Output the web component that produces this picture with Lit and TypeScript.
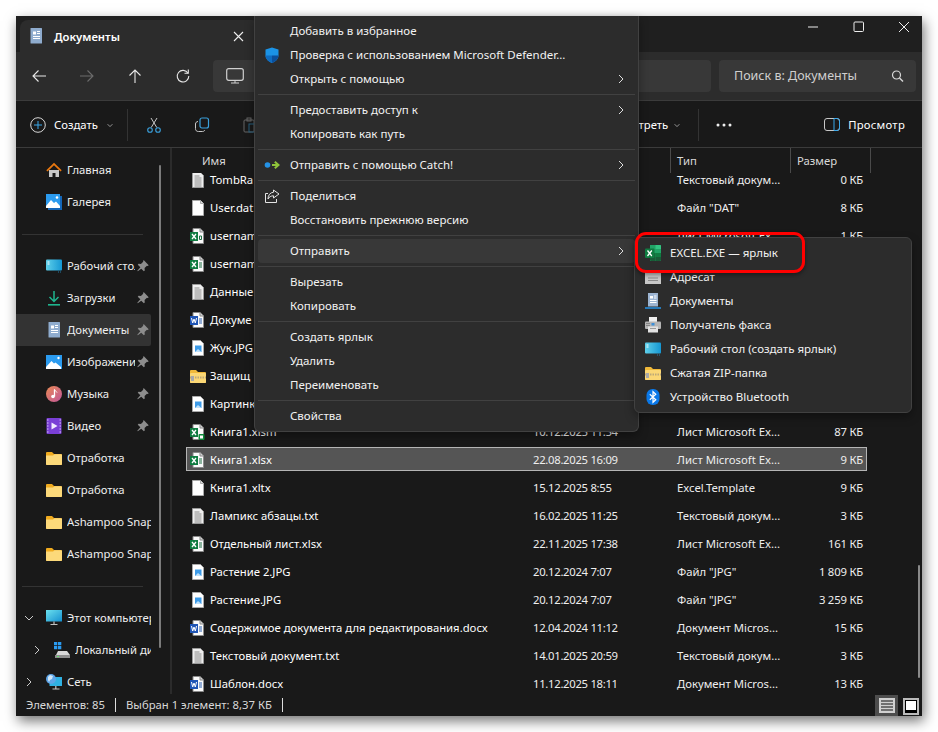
import { LitElement, html, css, svg } from "lit";
import { customElement } from "lit/decorators.js";

const ic = (body: unknown, w = 16, h = 16, vb = "0 0 16 16") =>
  html`<svg width=${w} height=${h} viewBox=${vb} fill="none">${body}</svg>`;

const page = svg`<path d="M3 .5h7l3.500 3.500v11.500H3z" fill="#fafafa" stroke="#8a8a8a"/><path d="M10 .5V4h3.500" fill="#d8d8d8" stroke="#8a8a8a"/>`;
const icons: Record<string, () => unknown> = {
  txt: () => ic(svg`<path d="M2.500.5h8l3 3v12h-11z" fill="#eee" stroke="#9a9a9a"/><path d="M4.500 4h5M4.500 6h7M4.500 8h7M4.500 10h7M4.500 12h7M4.500 14h7" stroke="#8c8c8c"/>`),
  blank: () => ic(svg`<path d="M2.500.5h8l3 3v12h-11z" fill="#fff" stroke="#aaa"/><path d="M10.500.5v3h3" fill="#ddd" stroke="#aaa"/>`),
  xls: () => ic(svg`${page}<path d="M9 7h3M9 9h3M9 11h3" stroke="#1d6f42"/><rect x="0" y="4" width="8" height="9" fill="#107c41"/><path d="M2 6l4 5M6 6l-4 5" stroke="#fff" stroke-width="1.300"/>`),
  xla: () => ic(svg`${page}<rect x="0" y="4" width="8" height="9" fill="#107c41"/><path d="M2 6l4 5M6 6l-4 5" stroke="#fff" stroke-width="1.300"/><path d="M9.500 8h2v3.500h-2z" stroke="#1d6f42"/>`),
  xlm: () => ic(svg`${page}<rect x="0" y="4" width="8" height="9" fill="#107c41"/><path d="M2 6l4 5M6 6l-4 5" stroke="#fff" stroke-width="1.300"/><rect x="8.500" y="10" width="6" height="6" rx="1" fill="#0e8a3a"/><rect x="10" y="11.500" width="3" height="3" fill="#fff"/>`),
  doc: () => ic(svg`${page}<path d="M9 7h3M9 9h3M9 11h3" stroke="#2b5fb0"/><rect x="0" y="4" width="8" height="9" fill="#1f55b5"/><path d="M1.500 6l1.200 5 1.300-4 1.300 4 1.200-5" stroke="#fff"/>`),
  img: () => ic(svg`<path d="M2.500.5h8l3 3v12h-11z" fill="#fff" stroke="#aaa"/><rect x="5" y="5.500" width="6.500" height="6.500" fill="#3d9be8"/><path d="M5 12l3-3 3.500 3z" fill="#bfe1fb"/>`),
  zip: () => ic(svg`<path d="M0 3a1 1 0 011-1h5l2 2h7a1 1 0 011 1v9a1 1 0 01-1 1H1a1 1 0 01-1-1z" fill="#f0b93a"/><rect y="5" width="16" height="10" rx="1" fill="#fbd775"/><path d="M0 9.500h16" stroke="#bda979" stroke-width="2" stroke-dasharray="1.500 1"/><rect x="1" y="8" width="3" height="5" fill="#a8a8a8"/>`),
  folder: () => ic(svg`<path d="M0 3a1 1 0 011-1h5l2 2h7a1 1 0 011 1v9a1 1 0 01-1 1H1a1 1 0 01-1-1z" fill="#f0ab1f"/><path d="M0 5.500h7l1.500-1.300H15a1 1 0 011 1V14a1 1 0 01-1 1H1a1 1 0 01-1-1z" fill="#fcd97a"/>`),
  home: () => ic(svg`<path d="M3 8h10v7H9.500v-4h-3v4H3z" fill="#c9c9c9"/><path d="M8 .8L.3 8.300l1.200 1.200L8 3.300l6.500 6.200 1.200-1.200z" fill="#e8770f"/>`),
  gallery: () => ic(svg`<rect x="0" y="0" width="14" height="14" fill="#2b9bef"/><path d="M14 2h2v14H2v-2h12z" fill="#1466b8"/><path d="M0 12l5-6 3 3 2-1.500 4 4.500v2H0z" fill="#fff"/><circle cx="11" cy="3.500" r="1.300" fill="#fff"/>`),
  desktop: () => ic(svg`<defs><linearGradient id="dk" x2="1"><stop stop-color="#5fd0ea"/><stop offset="1" stop-color="#1597d3"/></linearGradient></defs><rect y="1.500" width="16" height="11" rx="1" fill="url(#dk)"/><path d="M1.500 4h2M1.500 6h2" stroke="#fff"/><path d="M12 14h.8M14 14h.8" stroke="#2a8fc4"/>`),
  download: () => ic(svg`<path d="M8 1v10M3.500 7L8 11.500 12.500 7" stroke="#1fb58f" stroke-width="1.500"/><path d="M2 14.800h12" stroke="#1fb58f" stroke-width="1.600"/>`),
  documents: () => ic(svg`<rect x="2.500" y="0" width="11.500" height="15.500" rx=".5" fill="#8facce"/><path d="M5 3.500h3v3H5z" fill="#fff"/><path d="M9 3.500h3M9 5.500h3M5 8.500h7M5 10.500h7" stroke="#fff"/>`),
  pictures: () => ic(svg`<rect width="16" height="14" y="1" fill="#2b9bef"/><path d="M0 13l5.500-6 2.500 2.500 1.500-1L15 13v2H0z" fill="#fff"/><circle cx="12.500" cy="4" r="1.200" fill="#fff"/>`),
  music: () => ic(svg`<defs><linearGradient id="mu" x2="1" y2="1"><stop stop-color="#ea8a54"/><stop offset="1" stop-color="#c0569a"/></linearGradient></defs><circle cx="8" cy="8" r="8" fill="url(#mu)"/><path d="M8.500 3.500v7" stroke="#fff" stroke-width="1.300"/><path d="M8.500 3.500c.5 1.500 2 1.700 2.500 3" stroke="#fff"/><circle cx="7" cy="10.500" r="1.800" fill="#fff"/>`),
  video: () => ic(svg`<rect x=".5" y="0" width="15" height="16" rx="1" fill="#7a3fd6"/><path d="M1 2h1.500M1 5h1.500M1 8h1.500M1 11h1.500M1 14h1.500M13.500 2H15M13.500 5H15M13.500 8H15M13.500 11H15M13.500 14H15" stroke="#d7c2f7"/><path d="M5.500 4.500v7l6-3.500z" fill="#f2e9ff"/>`),
  pc: () => ic(svg`<defs><linearGradient id="pc" x2="1" y2="1"><stop stop-color="#6be0ee"/><stop offset="1" stop-color="#1590d0"/></linearGradient></defs><rect y="0" width="16" height="11.500" fill="url(#pc)"/><path d="M8 11.500V14M4.500 14.500h7" stroke="#bfbfbf" stroke-width="1.200"/>`),
  drive: () => ic(svg`<path d="M0 0h3.300v3.300H0zM4 0h3.300v3.300H4zM0 4h3.300v3.300H0zM4 4h3.300v3.300H4z" fill="#2a9af0"/><path d="M2 13l2-4h9l3 4v3H1z" fill="#d8d8d8"/><path d="M1 13h15v3H1z" fill="#8f8f8f"/><path d="M3 14.500h2" stroke="#5fe06a"/>`),
  net: () => ic(svg`<rect x="3.500" y="3" width="12.500" height="9" fill="#2fb1e3"/><path d="M9.800 12v2.500M6.500 15h7" stroke="#c5c5c5" stroke-width="1.200"/><circle cx="5" cy="5" r="5" fill="#5ea5e8"/><path d="M2 3l2-2 3 1-1 3-2 1-1 2-1-2z" fill="#cfe6f8"/>`),
  defender: () => ic(svg`<path d="M8 .5l6.500 2v6c0 4-4 6.500-6.500 7.500-2.500-1-6.500-3.500-6.500-7.500v-6z" fill="#1b93e6"/><path d="M8 .5v15.500c-2.500-1-6.500-3.500-6.500-7.500H8z" fill="#0f6cc0"/><path d="M8 8.500h6.500c0 4-4 6.500-6.500 7.500z" fill="#0b4f9c"/>`),
  catch: () => ic(svg`<circle cx="3.500" cy="8" r="2.800" fill="#2492e6"/><path d="M8 8h6M10.800 4.800L14.500 8l-3.700 3.200" stroke="#8fc43a" stroke-width="2"/>`),
  share: () => ic(svg`<path d="M4 5.500H1.500v9h11V11" stroke="#e4e4e4"/><path d="M9.500 2l5.500 4-5.500 4V7.800C7 7.800 5 9 4 11c0-4 2.300-6.500 5.500-6.800z" stroke="#e4e4e4"/>`),
  excel: () => ic(svg`<path d="M5 0h10a1 1 0 011 1v14a1 1 0 01-1 1H5z" fill="#21a366"/><path d="M10.500 0H15a1 1 0 011 1v3h-5.500z" fill="#33c481"/><path d="M5 8h5.500v8H6a1 1 0 01-1-1z" fill="#185c37"/><path d="M10.500 8H16v4h-5.500z" fill="#107c41"/><path d="M10.500 12H16v3a1 1 0 01-1 1h-4.500z" fill="#185c37"/><rect y="3.500" width="9.500" height="9.500" rx="1" fill="#107c41"/><path d="M2.500 5.500l4.300 5.500M6.800 5.500L2.500 11" stroke="#fff" stroke-width="1.300"/>`),
  mail: () => ic(svg`<rect y="3" width="16" height="12" fill="#c8c8c8"/><path d="M3 9h10M3 11.500h10" stroke="#8a8a8a"/>`),
  docsend: () => ic(svg`<rect x="3" y="0" width="10" height="13.500" fill="#9db5d2"/><path d="M5 3h3v2.500H5z" fill="#fff"/><path d="M9 3h2.500M9 5h2.500M5 7.500h6.500M5 9.500h6.500" stroke="#fff"/><path d="M0 15h16" stroke="#2492e6" stroke-width="1.500"/>`),
  fax: () => ic(svg`<rect x="4" y="0" width="8" height="5" fill="#eee"/><rect y="4.500" width="16" height="7.500" rx="1" fill="#b5b5b5"/><rect x="3" y="9.500" width="10" height="6" fill="#e2e2e2"/><path d="M1.500 6.500h3M1.500 8.500h3M5.500 11.500h5" stroke="#555" stroke-dasharray="1 1"/><rect x="6.500" y="6" width="3" height="2.500" fill="#3d8fd8"/>`),
  bt: () => ic(svg`<rect x="1.500" y="0" width="13" height="16" rx="6" fill="#0a78e8"/><path d="M4.800 5.200l6 5.500L8 13.300V2.700l2.800 2.600-6 5.500" stroke="#fff" stroke-width="1.200"/>`),
};

const chev = (d = "M3 1l4 4-4 4", w = 10) =>
  html`<svg width=${w} height=${w} viewBox="0 0 10 10" fill="none"><path d=${d} stroke="currentColor"/></svg>`;
const pin = () =>
  ic(svg`<path d="M9 1.500l5.500 5.500-1 1-1-.3-2.700 2.700.2 2.600-1 1-3-3L2 14l-.500-.5 3.500-4-3-3 1-1 2.600.2L8.300 3l-.3-1z" fill="#8d8d8d"/>`, 14, 14);

type NavRow = { t?: string; i?: string; pin?: boolean; tree?: "open" | "closed"; sub?: boolean; on?: boolean; div?: boolean };
const nav: NavRow[] = [
  { t: "Главная", i: "home" },
  { t: "Галерея", i: "gallery" },
  { div: true },
  { t: "Рабочий стол", i: "desktop", pin: true },
  { t: "Загрузки", i: "download", pin: true },
  { t: "Документы", i: "documents", pin: true, on: true },
  { t: "Изображения", i: "pictures", pin: true },
  { t: "Музыка", i: "music", pin: true },
  { t: "Видео", i: "video", pin: true },
  { t: "Отработка", i: "folder" },
  { t: "Отработка", i: "folder" },
  { t: "Ashampoo Snap", i: "folder" },
  { t: "Ashampoo Snap", i: "folder" },
  { div: true },
  { t: "Этот компьютер", i: "pc", tree: "open" },
  { t: "Локальный диск", i: "drive", tree: "closed", sub: true },
  { t: "Сеть", i: "net", tree: "closed" },
];

// rows that sit behind the context menu only show what is visible round it
const files = [
  ["txt", "TombRa", "", "Текстовый докум...", "0 КБ"],
  ["blank", "User.dat", "", 'Файл "DAT"', "8 КБ"],
  ["xla", "usernam", "", "Лист Microsoft Ex...", "1 КБ"],
  ["xls", "usernam", "", "", ""],
  ["txt", "Данные", "", "", ""],
  ["doc", "Докуме", "", "", ""],
  ["img", "Жук.JPG", "", "", ""],
  ["zip", "Защищ", "", "", ""],
  ["img", "Картинк", "", "", ""],
  ["xlm", "Книга1.xlsm", "10.12.2025 11:54", "Лист Microsoft Ex...", "87 КБ"],
  ["xls", "Книга1.xlsx", "22.08.2025 16:09", "Лист Microsoft Ex...", "9 КБ"],
  ["blank", "Книга1.xltx", "15.12.2025 8:55", "Excel.Template", "9 КБ"],
  ["txt", "Лампикс абзацы.txt", "16.02.2025 11:25", "Текстовый докум...", "3 КБ"],
  ["xls", "Отдельный лист.xlsx", "22.11.2025 17:38", "Лист Microsoft Ex...", "161 КБ"],
  ["img", "Растение 2.JPG", "20.12.2024 7:07", 'Файл "JPG"', "1 809 КБ"],
  ["img", "Растение.JPG", "20.12.2024 7:07", 'Файл "JPG"', "3 259 КБ"],
  ["doc", "Содержимое документа для редактирования.docx", "12.04.2024 11:12", "Документ Micros...", "15 КБ"],
  ["txt", "Текстовый документ.txt", "14.01.2025 20:59", "Текстовый докум...", "3 КБ"],
  ["doc", "Шаблон.docx", "11.12.2025 18:11", "Документ Micros...", "13 КБ"],
];

type MenuRow = { t?: string; i?: string; more?: boolean; on?: boolean } | null;
const menu: MenuRow[] = [
  { t: "Добавить в избранное" },
  { t: "Проверка с использованием Microsoft Defender...", i: "defender" },
  { t: "Открыть с помощью", more: true },
  null,
  { t: "Предоставить доступ к", more: true },
  { t: "Копировать как путь" },
  null,
  { t: "Отправить с помощью Catch!", i: "catch", more: true },
  null,
  { t: "Поделиться", i: "share" },
  { t: "Восстановить прежнюю версию" },
  null,
  { t: "Отправить", more: true, on: true },
  null,
  { t: "Вырезать" },
  { t: "Копировать" },
  null,
  { t: "Создать ярлык" },
  { t: "Удалить" },
  { t: "Переименовать" },
  null,
  { t: "Свойства" },
];

const sendTo = [
  ["excel", "EXCEL.EXE — ярлык"],
  ["mail", "Адресат"],
  ["docsend", "Документы"],
  ["fax", "Получатель факса"],
  ["desktop", "Рабочий стол (создать ярлык)"],
  ["zip", "Сжатая ZIP-папка"],
  ["bt", "Устройство Bluetooth"],
];

@customElement("app-root")
export class AppRoot extends LitElement {
  static styles = css`
    :host {
      display: block;
      position: relative;
      width: 938px;
      height: 732px;
      background: #fff;
      padding: 16px;
      box-sizing: border-box;
      overflow: hidden;
      font: 11.300px/16px "Noto Sans", "Open Sans", sans-serif;
      color: #fff;
    }
    .win {
      position: relative;
      width: 906px;
      height: 700px;
      display: flex;
      flex-direction: column;
      background: #191919;
      box-shadow: 2px 5px 12px rgba(0, 0, 0, 0.55);
    }
    .title {
      height: 36px;
      flex: none;
      display: flex;
      background: #1f1f1f;
      padding: 4px 0 0 4px;
      box-sizing: border-box;
    }
    .tab {
      width: 240px;
      display: flex;
      align-items: center;
      background: #2c2c2c;
      border-radius: 8px 8px 0 0;
      padding-left: 8px;
      box-sizing: border-box;
      gap: 10px;
      font-weight: 600;
    }
    .tab b { font-weight: 600; padding-top: 2px; }
    .tab .x { margin-left: auto; margin-right: 14px; display: flex; }
    .winbtns { margin-left: auto; margin-right: -5px; display: flex; }
    .winbtns span { width: 45.500px; height: 14px; display: flex; align-items: center; justify-content: center; }
    .addr {
      height: 48px;
      flex: none;
      display: flex;
      align-items: center;
      background: #2c2c2c;
      border-bottom: 1px solid #3b3b3b;
    }
    .navbtn { width: 48px; display: flex; justify-content: center; color: #e8e8e8; }
    .navbtn:first-child { margin-left: -1px; }
    .navbtn.off { color: #6c6c6c; }
    .path {
      width: 498px;
      height: 32px;
      margin-left: 6px;
      background: #383838;
      border-radius: 4px;
      display: flex;
      align-items: center;
      padding-left: 13px;
      box-sizing: border-box;
    }
    .search {
      width: 197px;
      height: 32px;
      margin-left: 8px;
      background: #383838;
      border-radius: 4px;
      display: flex;
      align-items: center;
      justify-content: space-between;
      padding: 0 12px 0 15px;
      box-sizing: border-box;
      color: #cfcfcf;
      font-size: 12.500px;
    }
    .tools {
      height: 47px;
      flex: none;
      display: flex;
      align-items: center;
      border-bottom: 1px solid #3b3b3b;
      padding: 2px 0 0 14px;
      box-sizing: border-box;
    }
    .create { display: flex; align-items: center; gap: 8px; width: 97px; flex: none; }
    .create i { color: #b5b5b5; display: flex; }
    .sep { width: 1px; height: 32px; background: #333; flex: none; }
    .tool { width: 48px; display: flex; justify-content: center; }
    .tools .tool:first-of-type { margin-left: 2px; }
    .right { margin-left: auto; display: flex; align-items: center; }
    .sort { display: flex; align-items: center; gap: 5px; margin-right: 17px; }
    .sort i { color: #b5b5b5; display: flex; }
    .dots { width: 50px; display: flex; justify-content: center; margin-right: 75px; }
    .preview { display: flex; align-items: center; gap: 8px; margin-right: 17px; letter-spacing: 0.25px; }
    .main { flex: 1; display: flex; min-height: 0; }
    .side {
      position: relative;
      width: 154px;
      flex: none;
      padding-top: 6px;
      box-sizing: border-box;
    }
    .bar { position: absolute; background: #7b7b7b; border-radius: 1px; width: 2px; }
    .side .bar { left: 143px; top: 17px; height: 483px; }
    .nav {
      width: 135px;
      height: 32px;
      display: flex;
      align-items: center;
      padding-left: 30px;
      box-sizing: border-box;
      border-radius: 0 2px 2px 0;
      white-space: nowrap;
      color: #eee;
    }
    .nav.on { background: #333; }
    .nav.tree { padding-left: 8px; }
    .nav.sub { padding-left: 16px; }
    .slot { width: 22px; flex: none; display: flex; color: #ccc; }
    .nav > svg { flex: none; }
    .nav .lbl { flex: 1; min-width: 0; overflow: hidden; margin-left: 5px; }
    .nav .pin { width: 16px; flex: none; display: flex; justify-content: center; }
    .ndiv { height: 32px; display: flex; align-items: center; padding-left: 6px; }
    .ndiv::before { content: ""; width: 121px; height: 1px; background: #333; }
    .vline { width: 2px; background: #2b2b2b; flex: none; }
    .files { position: relative; flex: 1; min-width: 0; overflow: hidden; display: flex; flex-direction: column; }
    .head {
      height: 25px;
      flex: none;
      position: relative;
      z-index: 1;
      background: #191919;
      color: #d8d8d8;
      display: grid;
      grid-template-columns: 499px 120px 80px;
    }
    .head span { padding: 5px 0 0 6px; box-sizing: border-box; border-right: 1px solid #4a4a4a; }
    .head span:first-child { padding-left: 30px; }
    .list { display: flex; flex-direction: column; gap: 4px; margin-top: -5px; padding-left: 14px; }
    .row {
      width: 681px;
      height: 24px;
      flex: none;
      box-sizing: border-box;
      display: grid;
      grid-template-columns: 20px 323px 144px 100px 86px;
      align-items: center;
      border: 1px solid transparent;
      padding-left: 3px;
      white-space: nowrap;
      color: #eee;
    }
    .row .name { color: #fff; }
    .row svg { display: block; }
    .row .date { letter-spacing: -0.3px; }
    .row .size { text-align: right; letter-spacing: -0.2px; }
    .row.sel {
      background: #555;
      border-color: #b5b5b5;
      margin: -1px 0 1px;
      padding-top: 2px;
    }
    .files .bar { right: 2px; top: 417px; height: 113px; background: #8a8a8a; }
    .status {
      height: 22px;
      flex: none;
      display: flex;
      align-items: center;
      padding-left: 10px;
      color: #d8d8d8;
    }
    .status .s { width: 1px; height: 14px; background: #ddd; margin: 0 10px; }
    .views { margin-left: auto; display: flex; align-items: flex-end; height: 22px; padding-right: 3px; gap: 5px; }
    .v1 { width: 23px; height: 21px; background: #4d4d4d; display: flex; justify-content: center; align-items: center; }
    .v2 { width: 16px; height: 17px; background: #bbb; display: flex; padding: 2px; box-sizing: border-box; margin-bottom: 1px; }
    .v2 b { flex: 1; background: #fff; border: 1px solid #000; border-bottom-width: 3px; }
    .menu {
      position: absolute;
      z-index: 2;
      background: #2c2c2c;
      border: 1px solid #414141;
      box-sizing: border-box;
      color: #f2f2f2;
      padding: 3px;
      font-size: 11.500px;
      box-shadow: 0 4px 10px rgba(0, 0, 0, 0.35);
    }
    .main-menu { left: 238px; top: 0; width: 385px; height: 416px; border-top: 0; border-radius: 0 0 6px 6px; }
    .sub-menu { left: 618px; top: 221px; width: 278px; height: 176px; padding: 3px 4px; border-radius: 6px; }
    .mi { height: 24px; display: flex; align-items: center; border-radius: 4px; }
    .ico { display: flex; justify-content: center; flex: none; box-sizing: border-box; }
    .main-menu .ico { width: 32px; padding-right: 5px; }
    .mi .more { margin-left: auto; margin-right: 9px; display: flex; color: #ddd; }
    .mi.on { background: #383838; }
    .msep { height: 1px; background: #414141; margin: 3px 0; }
    .sub-menu .mi { padding-left: 6px; }
    .sub-menu .ico { width: 16px; margin-right: 9px; }
    .red {
      position: absolute;
      z-index: 3;
      left: 619px;
      top: 216px;
      width: 170px;
      height: 41px;
      border: 3px solid #f00;
      border-radius: 11px;
      box-sizing: border-box;
      box-shadow: 0 2px 4px rgba(0, 0, 0, 0.4);
    }
  `;

  render() {
    return html`
      <div class="win">
        <div class="title">
          <div class="tab">
            ${icons.documents()}
            <b>Документы</b>
            <span class="x">${ic(svg`<path d="M3 3l9 9M12 3l-9 9" stroke="#eee" stroke-width="1.100"/>`, 15, 15, "0 0 15 15")}</span>
          </div>
          <div class="winbtns">
            <span>${ic(svg`<path d="M3 8h10" stroke="#eee"/>`)}</span>
            <span>${ic(svg`<rect x="3" y="3" width="9.500" height="9.500" rx="1" stroke="#eee"/>`)}</span>
            <span>${ic(svg`<path d="M3 3l10 10M13 3L3 13" stroke="#eee"/>`)}</span>
          </div>
        </div>

        <div class="addr">
          <span class="navbtn">${ic(svg`<path d="M15 8H2M7.500 2.500L2 8l5.500 5.500" stroke="currentColor" stroke-width="1.100"/>`)}</span>
          <span class="navbtn off">${ic(svg`<path d="M1 8h13M8.500 2.500L14 8l-5.500 5.500" stroke="currentColor" stroke-width="1.100"/>`)}</span>
          <span class="navbtn">${ic(svg`<path d="M8 15V2M2.500 7.500L8 2l5.500 5.500" stroke="currentColor" stroke-width="1.100"/>`)}</span>
          <span class="navbtn">${ic(svg`<path d="M13 5.200A5.800 5.800 0 1 0 13.800 8" stroke="currentColor" stroke-width="1.100"/><path d="M13.300 1.500V5.300H9.500" stroke="currentColor" stroke-width="1.100"/>`)}</span>
          <div class="path">
            ${ic(svg`<rect x=".7" y=".7" width="16.600" height="11.600" rx="2" stroke="#d0d0d0" stroke-width="1.200"/><path d="M9 12.500V15M5 15h8" stroke="#d0d0d0"/>`, 18, 16, "0 0 18 16")}
          </div>
          <div class="search">
            <span>Поиск в: Документы</span>
            ${ic(svg`<circle cx="6.500" cy="6" r="4" stroke="#d8d8d8" stroke-width="1.200"/><path d="M9.500 9l3.500 3.500" stroke="#d8d8d8" stroke-width="1.400"/>`, 14, 14, "0 0 14 14")}
          </div>
        </div>

        <div class="tools">
          <div class="create">
            ${ic(svg`<circle cx="8" cy="8" r="7.300" stroke="#d8d8d8"/><path d="M8 4v8M4 8h8" stroke="#3aa8ea"/>`)}
            <span>Создать</span>
            <i>${chev("M2 4l3 3 3-3", 8)}</i>
          </div>
          <div class="sep"></div>
          <span class="tool">${ic(svg`<path d="M5 1l5.800 9.500M11 1L5.200 10.500" stroke="#c8c8c8"/><circle cx="4" cy="13" r="2.300" stroke="#3aa0dc" stroke-width="1.100"/><circle cx="12" cy="13" r="2.300" stroke="#3aa0dc" stroke-width="1.100"/>`)}</span>
          <span class="tool">${ic(svg`<rect x="6" y="1" width="8.500" height="10" rx="2" stroke="#3aa0dc" stroke-width="1.200"/><path d="M4 4.500c-1.500.2-2.500 1-2.500 2.500v4.500c0 2 1 3 3 3h4c1 0 2-.5 2.300-1.500" stroke="#c8c8c8"/>`)}</span>
          <span class="tool">${ic(svg`<rect x="2" y="3" width="10" height="12" rx="1" stroke="#666"/><rect x="5" y="1" width="4" height="3" stroke="#666"/><rect x="7" y="7" width="7" height="8" stroke="#28607f"/>`)}</span>
          <div class="right">
            <div class="sort"><span>Просмотреть</span><i>${chev("M2 4l3 3 3-3", 8)}</i></div>
            <div class="sep"></div>
            <span class="dots">${ic(svg`<circle cx="2" cy="8" r="1.500" fill="#eee"/><circle cx="8" cy="8" r="1.500" fill="#eee"/><circle cx="14" cy="8" r="1.500" fill="#eee"/>`)}</span>
            <div class="preview">
              ${ic(svg`<rect x=".5" y="1.500" width="15" height="12" rx="2.500" stroke="#c8c8c8"/><path d="M10 1.500h3a2.500 2.500 0 012.500 2.500v7a2.500 2.500 0 01-2.500 2.500h-3z" stroke="#3aa8ea"/>`)}
              <span>Просмотр</span>
            </div>
          </div>
        </div>

        <div class="main">
          <div class="side">
            ${nav.map((n) =>
              n.div
                ? html`<div class="ndiv"></div>`
                : html`<div class="nav ${n.on ? "on" : ""} ${n.tree ? "tree" : ""} ${n.sub ? "sub" : ""}">
                    ${n.tree
                      ? html`<span class="slot">${n.tree === "open" ? chev("M1 3l4 4 4-4") : chev("M3 1l4 4-4 4")}</span>`
                      : ""}
                    ${icons[n.i!]()}
                    <span class="lbl">${n.t}</span>
                    ${n.pin ? html`<span class="pin">${pin()}</span>` : ""}
                  </div>`
            )}
            <div class="bar"></div>
          </div>
          <div class="vline"></div>
          <div class="files">
            <div class="head"><span>Имя</span><span>Тип</span><span>Размер</span></div>
            <div class="list">
              ${files.map(
                ([i, n, d, t, s]) => html`<div class="row ${n === "Книга1.xlsx" ? "sel" : ""}">
                  ${icons[i]()}
                  <span class="name">${n}</span>
                  <span class="date">${d}</span>
                  <span>${t}</span>
                  <span class="size">${s}</span>
                </div>`
              )}
            </div>
            <div class="bar"></div>
          </div>
        </div>

        <div class="status">
          <span>Элементов: 85</span><i class="s"></i>
          <span>Выбран 1 элемент: 8,37 КБ</span><i class="s"></i>
          <div class="views">
            <div class="v1">${ic(svg`<rect width="16" height="15" fill="#d0d0d0"/><path d="M2 3h12M2 6h12M2 9h12M2 12h12" stroke="#111"/>`, 16, 15, "0 0 16 15")}</div>
            <div class="v2"><b></b></div>
          </div>
        </div>

        <div class="menu main-menu">
          ${menu.map((m) =>
            m
              ? html`<div class="mi ${m.on ? "on" : ""}">
                  <span class="ico">${m.i ? icons[m.i]() : ""}</span>
                  <span>${m.t}</span>
                  ${m.more ? html`<span class="more">${chev()}</span>` : ""}
                </div>`
              : html`<div class="msep"></div>`
          )}
        </div>
        <div class="menu sub-menu">
          ${sendTo.map(
            ([i, t]) => html`<div class="mi"><span class="ico">${icons[i]()}</span><span>${t}</span></div>`
          )}
        </div>
        <div class="red"></div>
      </div>
    `;
  }
}
